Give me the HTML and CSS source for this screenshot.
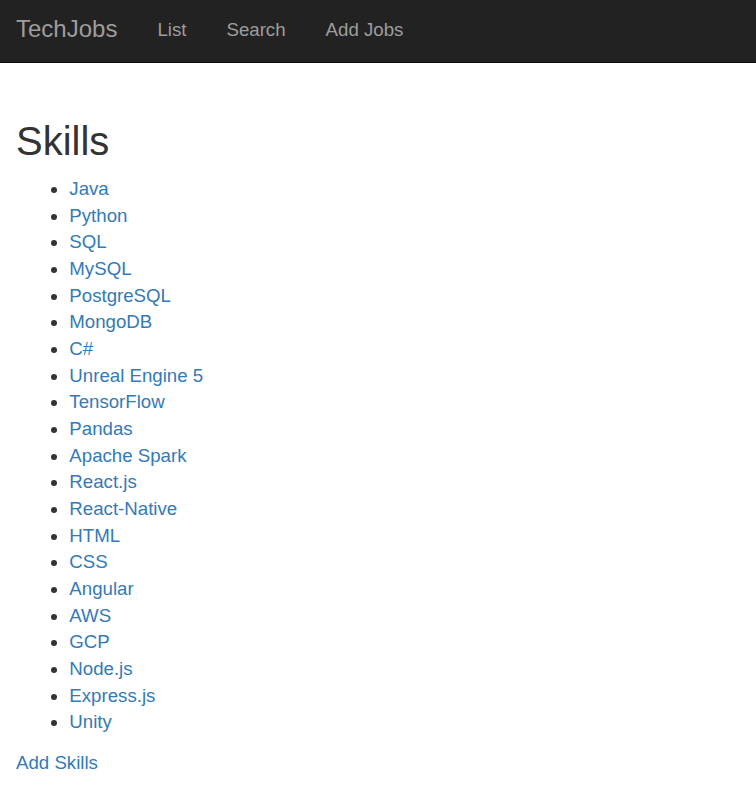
FILE: index.html
```html
<!DOCTYPE html>
<html>
<head>
<meta charset="utf-8">
<title>TechJobs</title>
<link rel="stylesheet" href="styles.css">
</head>
<body>
<nav class="navbar">
  <a class="brand" href="#">TechJobs</a>
  <ul class="nav-links">
    <li><a href="#">List</a></li>
    <li><a href="#">Search</a></li>
    <li><a href="#">Add Jobs</a></li>
  </ul>
</nav>
<main class="container">
  <h1 class="title">Skills</h1>
  <ul class="skills">
    <li><a href="#">Java</a></li>
    <li><a href="#">Python</a></li>
    <li><a href="#">SQL</a></li>
    <li><a href="#">MySQL</a></li>
    <li><a href="#">PostgreSQL</a></li>
    <li><a href="#">MongoDB</a></li>
    <li><a href="#">C#</a></li>
    <li><a href="#">Unreal Engine 5</a></li>
    <li><a href="#">TensorFlow</a></li>
    <li><a href="#">Pandas</a></li>
    <li><a href="#">Apache Spark</a></li>
    <li><a href="#">React.js</a></li>
    <li><a href="#">React-Native</a></li>
    <li><a href="#">HTML</a></li>
    <li><a href="#">CSS</a></li>
    <li><a href="#">Angular</a></li>
    <li><a href="#">AWS</a></li>
    <li><a href="#">GCP</a></li>
    <li><a href="#">Node.js</a></li>
    <li><a href="#">Express.js</a></li>
    <li><a href="#">Unity</a></li>
  </ul>
  <p class="add"><a href="#">Add Skills</a></p>
</main>
</body>
</html>
```
FILE: styles.css
```css
* { box-sizing: border-box; }
html, body { margin: 0; padding: 0; }
body {
  font-family: "Liberation Sans", Arial, Helvetica, sans-serif;
  font-size: 18.67px;
  line-height: 26.67px;
  color: #333;
  background: #fff;
}
a { color: #337ab7; text-decoration: none; }

.navbar {
  display: flex;
  align-items: flex-start;
  height: 63px;
  background: #222;
  border-bottom: 1px solid #080808;
}
.brand {
  display: block;
  font-size: 24px;
  line-height: 26.67px;
  color: #9d9d9d;
  padding: 16px 20px 0 16px;
}
.nav-links {
  display: flex;
  list-style: none;
  margin: 0;
  padding: 0;
}
.nav-links a {
  display: block;
  color: #9d9d9d;
  padding: 17px 20px 0 20px;
  line-height: 26.67px;
}

.container {
  padding: 56px 16px 0 16px;
}
.title {
  font-size: 40px;
  font-weight: 500;
  line-height: 44px;
  margin: 0 0 13px 0;
  color: #333;
}
.skills {
  margin: 0 0 14px 0;
  padding-left: 53.33px;
}
.add {
  margin: 0;
}
```
